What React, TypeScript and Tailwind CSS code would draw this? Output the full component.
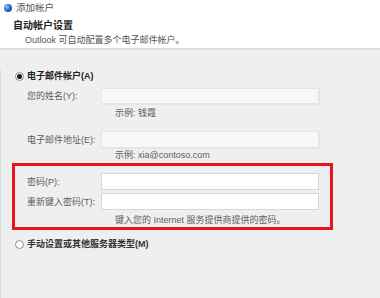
import React from "react";

const font = {
  fontFamily: '"Liberation Sans", "Noto Sans CJK SC", sans-serif',
};

function Radio({ checked }: { checked?: boolean }) {
  return (
    <span className="flex h-[9px] w-[9px] items-center justify-center rounded-full border border-[#8a8a8a] bg-white">
      {checked && <span className="h-[5px] w-[5px] rounded-full bg-[#1a1a1a]" />}
    </span>
  );
}

function Row({
  label,
  soft,
  h,
  className,
}: {
  label: string;
  soft?: boolean;
  h: string;
  className?: string;
}) {
  return (
    <div className={`flex items-center ${className ?? ""}`}>
      <div className="w-[74px] text-[9px] leading-[12px] text-[#5c5c5c]">{label}</div>
      <div
        className={`w-[218px] ${h} ${
          soft
            ? "border border-[#e4e4e4] bg-[#f8f8f8] shadow-[1px_1px_0_#e6e6e6]"
            : "border border-[#d6d6d6] bg-white"
        }`}
      />
    </div>
  );
}

export default function App() {
  return (
    <div className="relative h-[298px] w-[380px] overflow-hidden bg-[#efefef]" style={font}>
      <div className="h-[48px] bg-white">
        <div className="flex h-[16px] items-center gap-[4px] pl-[4px]">
          <svg width="8" height="8" viewBox="0 0 8 8">
            <defs>
              <radialGradient id="g" cx="0.35" cy="0.35" r="0.7">
                <stop offset="0" stopColor="#9ed0f5" />
                <stop offset="0.5" stopColor="#2b7fd0" />
                <stop offset="1" stopColor="#174f93" />
              </radialGradient>
            </defs>
            <circle cx="4" cy="4" r="4" fill="url(#g)" />
          </svg>
          <span className="text-[9.5px] leading-[12px] text-[#555]">添加帐户</span>
        </div>
        <div className="mt-[4px] pl-[13px] text-[10px] font-bold leading-[12px] text-[#222]">
          自动帐户设置
        </div>
        <div className="mt-[2px] pl-[25px] text-[9px] leading-[12px] text-[#555]">
          Outlook 可自动配置多个电子邮件帐户。
        </div>
      </div>
      <div className="h-[2px] bg-[#e0e0e0]" />
      <div className="h-[248px] border-l border-[#d6dce3]">
        <div className="mt-[20px] flex h-[12px] items-center gap-[3px] pl-[14px]">
          <Radio checked />
          <span className="text-[9px] font-bold leading-[12px] text-[#222]">电子邮件帐户(A)</span>
        </div>
        <Row label="您的姓名(Y):" soft h="h-[16px]" className="mt-[6px] pl-[26px]" />
        <div className="mt-[3px] pl-[114px] text-[9px] leading-[12px] text-[#5c5c5c]">示例: 钱霞</div>
        <Row label="电子邮件地址(E):" soft h="h-[17px]" className="mt-[12px] pl-[26px]" />
        <div className="mt-[1px] pl-[114px] text-[9px] leading-[12px] text-[#5c5c5c]">
          示例: xia@contoso.com
        </div>
        <div className="ml-[11px] mt-[2px] h-[67px] w-[321px] border-[3px] border-[#e8161f]">
          <Row label="密码(P):" h="h-[17px]" className="mt-[7px] pl-[12px]" />
          <Row label="重新键入密码(T):" h="h-[17px]" className="mt-[3px] pl-[12px]" />
          <div className="mt-[4px] pl-[100px] text-[9px] leading-[12px] text-[#5c5c5c]">
            键入您的 Internet 服务提供商提供的密码。
          </div>
        </div>
        <div className="mt-[8px] flex h-[12px] items-center gap-[3px] pl-[14px]">
          <Radio />
          <span className="text-[9px] font-bold leading-[12px] text-[#333]">手动设置或其他服务器类型(M)</span>
        </div>
      </div>
    </div>
  );
}
